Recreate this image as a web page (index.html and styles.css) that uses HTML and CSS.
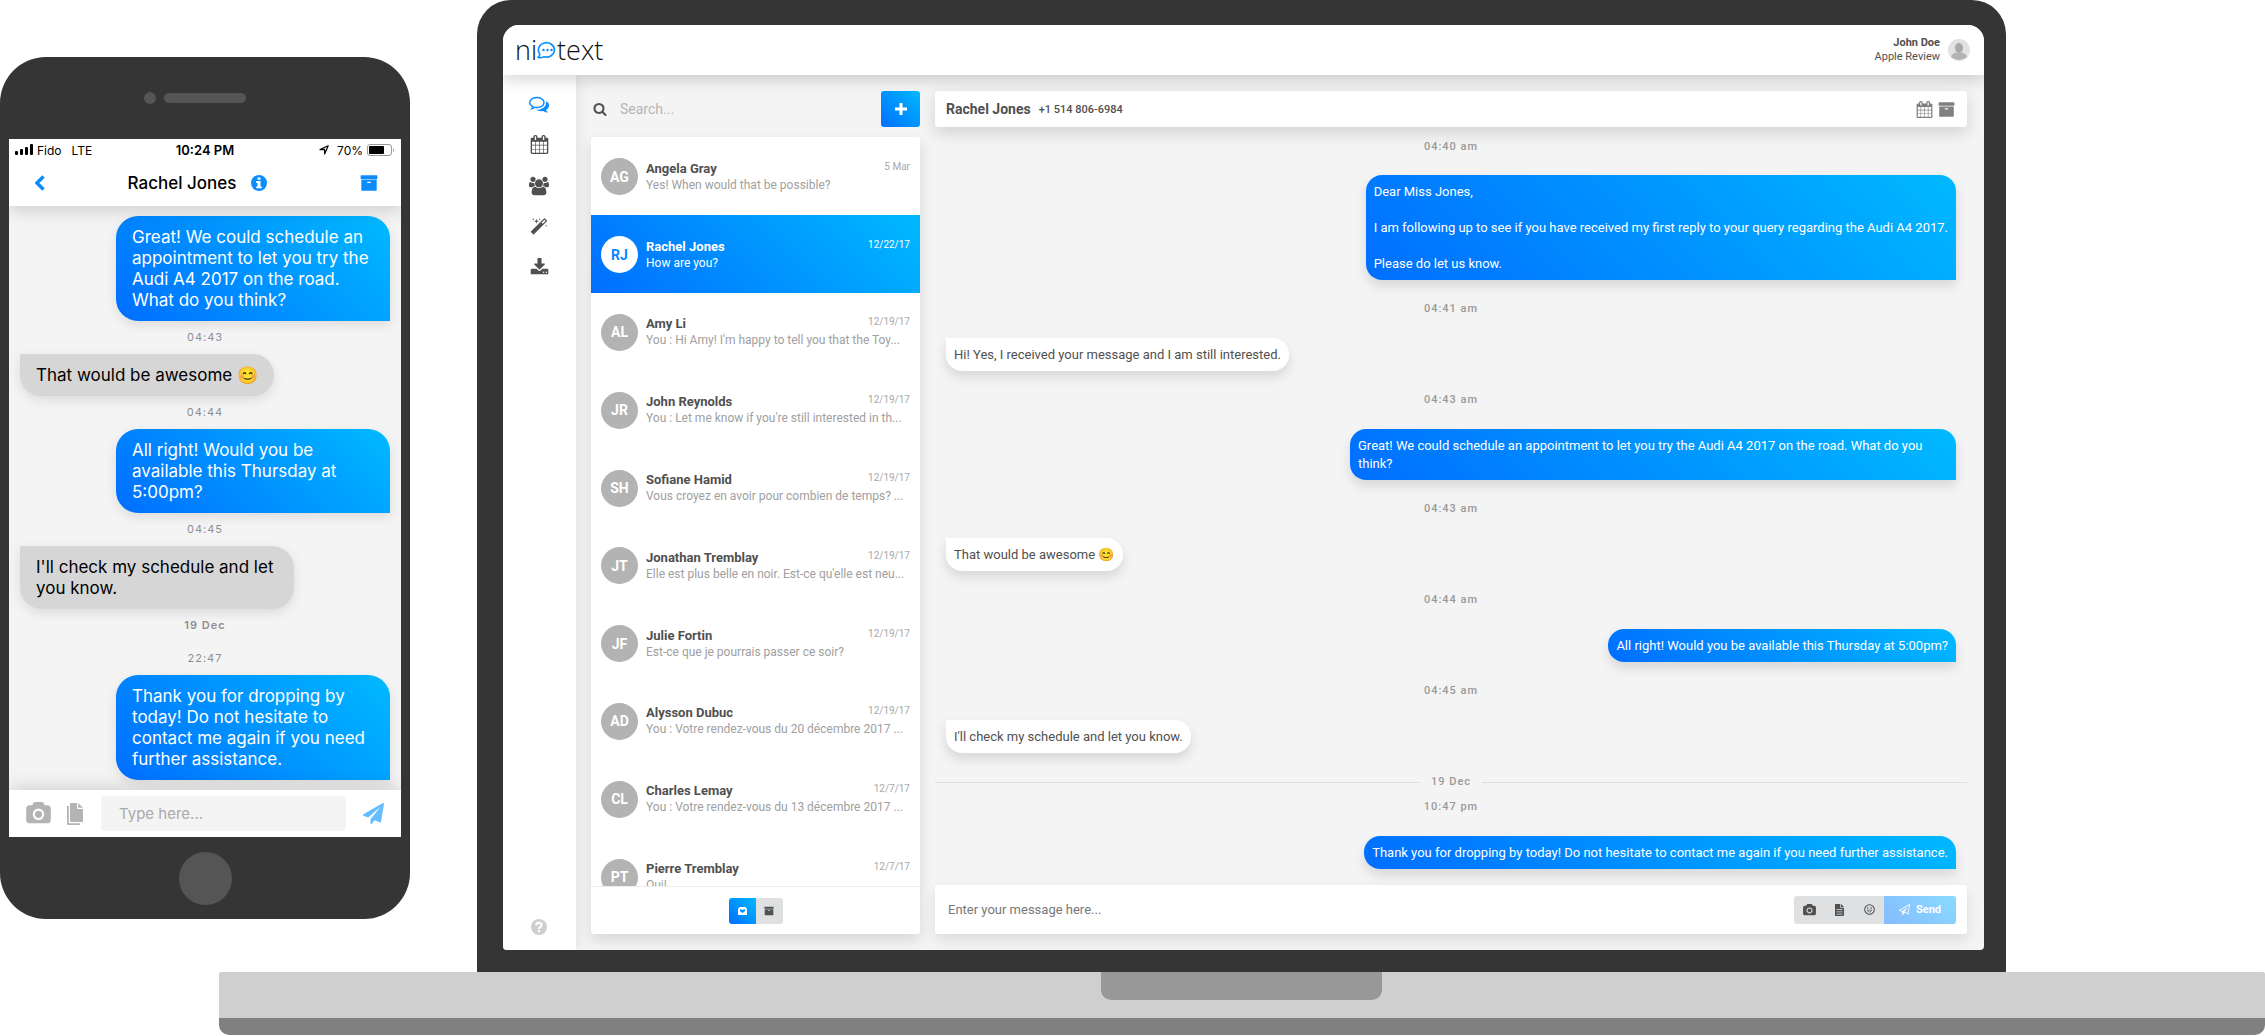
FILE: index.html
```html
<!DOCTYPE html>
<html lang="en">
<head>
<meta charset="utf-8">
<title>niotext</title>
<link rel="stylesheet" href="styles.css">
</head>
<body>
<svg class="sprite" aria-hidden="true">
  <symbol id="comments" viewBox="0 0 1792 1792"><path d="M704 384q-153 0-286 52t-211.500 141-78.500 191q0 82 53 158t149 132l97 56-35 84q34-20 62-39l44-31 53 10q78 14 153 14 153 0 286-52t211.500-141 78.500-191-78.500-191-211.500-141-286-52zm0-128q191 0 353.500 68.500t256.500 186.500 94 257-94 257-256.500 186.500-353.500 68.500q-86 0-176-16-124 88-278 128-36 9-86 16h-3q-11 0-20.500-8t-11.500-21q-1-3-1-6.500t.5-6.500 2-6l2.500-5 3.500-5.500 4-5 4.500-5 4-4.500q5-6 23-25t26-29.500 22.500-29 25-38.500 20.500-44q-124-72-195-177t-71-224q0-139 94-257t256.500-186.500 353.500-68.500zm822 1169q10 24 20.500 44t25 38.500 22.500 29 26 29.500 23 25q1 1 4 4.500t4.500 5 4 5 3.500 5.500l2.500 5 2 6 .5 6.500-1 6.500q-3 14-13 22t-22 7q-50-7-86-16-154-40-278-128-90 16-176 16-271 0-472-132 58 4 88 4 161 0 309-45t264-129q125-92 192-212t67-254q0-77-23-152 129 71 204 178t75 230q0 120-71 224.500t-195 176.500z"/></symbol>
  <symbol id="calendar" viewBox="0 0 1792 1792"><path d="M192 1664h288v-288h-288v288zm352 0h320v-288h-320v288zm-352-352h288v-320h-288v320zm352 0h320v-320h-320v320zm-352-384h288v-288h-288v288zm736 736h320v-288h-320v288zm-384-736h320v-288h-320v288zm768 736h288v-288h-288v288zm-384-352h320v-320h-320v320zm-352-864v-288q0-13-9.500-22.500t-22.500-9.500h-64q-13 0-22.500 9.500t-9.500 22.500v288q0 13 9.500 22.500t22.500 9.500h64q13 0 22.500-9.500t9.500-22.500zm736 864h288v-320h-288v320zm-384-384h320v-288h-320v288zm384 0h288v-288h-288v288zm32-480v-288q0-13-9.500-22.500t-22.500-9.500h-64q-13 0-22.500 9.500t-9.500 22.500v288q0 13 9.500 22.500t22.500 9.500h64q13 0 22.500-9.500t9.500-22.500zm384-64v1280q0 52-38 90t-90 38h-1408q-52 0-90-38t-38-90v-1280q0-52 38-90t90-38h128v-96q0-66 47-113t113-47h64q66 0 113 47t47 113v96h384v-96q0-66 47-113t113-47h64q66 0 113 47t47 113v96h128q52 0 90 38t38 90z"/></symbol>
  <symbol id="users" viewBox="0 0 1920 1792"><path d="M593 896q-162 5-265 128h-134q-82 0-138-40.500t-56-118.500q0-353 124-353 6 0 43.500 21t97.500 42.500 119 21.500q67 0 133-23-5 37-5 66 0 139 81 256zm1071 637q0 120-73 189.500t-194 69.500h-874q-121 0-194-69.500t-73-189.500q0-53 3.500-103.500t14-109 26.500-108.500 43-97.500 62-81 85.500-53.500 111.500-20q10 0 43 21.500t73 48 107 48 135 21.500 135-21.500 107-48 73-48 43-21.500q61 0 111.500 20t85.500 53.500 62 81 43 97.500 26.500 108.500 14 109 3.500 103.500zm-1024-1277q0 106-75 181t-181 75-181-75-75-181 75-181 181-75 181 75 75 181zm704 384q0 159-112.500 271.500t-271.500 112.500-271.500-112.500-112.500-271.500 112.500-271.500 271.500-112.500 271.500 112.500 112.500 271.500zm576 225q0 78-56 118.500t-138 40.500h-134q-103-123-265-128 81-117 81-256 0-29-5-66 66 23 133 23 59 0 119-21.500t97.500-42.500 43.500-21q124 0 124 353zm-128-609q0 106-75 181t-181 75-181-75-75-181 75-181 181-75 181 75 75 181z"/></symbol>
  <symbol id="magic" viewBox="0 0 1792 1792"><path d="M1254 581l293-293-107-107-293 293zm447-293q0 27-18 45l-1286 1286q-18 18-45 18t-45-18l-198-198q-18-18-18-45t18-45l1286-1286q18-18 45-18t45 18l198 198q18 18 18 45zm-1351-190l98 30-98 30-30 98-30-98-98-30 98-30 30-98zm350 162l196 60-196 60-60 196-60-196-196-60 196-60 60-196zm930 478l98 30-98 30-30 98-30-98-98-30 98-30 30-98zm-640-640l98 30-98 30-30 98-30-98-98-30 98-30 30-98z"/></symbol>
  <symbol id="download" viewBox="0 0 1792 1792"><path d="M1344 1344q0-26-19-45t-45-19-45 19-19 45 19 45 45 19 45-19 19-45zm256 0q0-26-19-45t-45-19-45 19-19 45 19 45 45 19 45-19 19-45zm128-224v320q0 40-28 68t-68 28h-1472q-40 0-68-28t-28-68v-320q0-40 28-68t68-28h465l135 136q58 56 136 56t136-56l136-136h464q40 0 68 28t28 68zm-325-569q17 41-14 70l-448 448q-18 19-45 19t-45-19l-448-448q-31-29-14-70 17-39 59-39h256v-448q0-26 19-45t45-19h256q26 0 45 19t19 45v448h256q42 0 59 39z"/></symbol>
  <symbol id="search" viewBox="0 0 1792 1792"><path d="M1216 832q0-185-131.500-316.500t-316.500-131.500-316.500 131.500-131.500 316.500 131.500 316.500 316.500 131.500 316.500-131.500 131.500-316.500zm512 832q0 52-38 90t-90 38q-54 0-90-38l-343-342q-179 124-399 124-143 0-273.500-55.500t-225-150-150-225-55.500-273.500 55.500-273.500 150-225 225-150 273.500-55.500 273.500 55.500 225 150 150 225 55.500 273.500q0 220-124 399l343 343q37 37 37 90z"/></symbol>
  <symbol id="archive" viewBox="0 0 1792 1792"><path d="M1088 832q0-26-19-45t-45-19h-256q-26 0-45 19t-19 45 19 45 45 19h256q26 0 45-19t19-45zm576-192v960q0 26-19 45t-45 19h-1408q-26 0-45-19t-19-45v-960q0-26 19-45t45-19h1408q26 0 45 19t19 45zm64-448v256q0 26-19 45t-45 19h-1536q-26 0-45-19t-19-45v-256q0-26 19-45t45-19h1536q26 0 45 19t19 45z"/></symbol>
  <symbol id="plane" viewBox="0 0 1792 1792"><path d="M1764 11q33 24 27 64l-256 1536q-5 29-32 45-14 8-31 8-11 0-24-5l-453-185-242 295q-18 23-49 23-13 0-22-4-19-7-30.500-23.500t-11.500-36.500v-349l864-1059-1069 925-395-162q-37-14-40-55-2-40 32-59l1664-960q15-9 32-9 20 0 36 11z"/></symbol>
  <symbol id="plane-o" viewBox="0 0 1792 1792"><path d="M1764 11q33 24 27 64l-256 1536q-5 29-32 45-14 8-31 8-11 0-24-5l-527-215-298 327q-18 21-47 21-14 0-23-4-19-7-30-23.500t-11-36.500v-452l-472-193q-37-14-40-55-3-39 32-59l1664-960q35-21 68 2zm-342 1499l221-1323-1434 827 336 137 863-639-478 797z"/></symbol>
  <symbol id="camera" viewBox="0 0 1920 1792"><path d="M960 672q119 0 203.500 84.500t84.500 203.500-84.500 203.500-203.500 84.500-203.500-84.500-84.500-203.500 84.500-203.500 203.500-84.500zm704-416q106 0 181 75t75 181v896q0 106-75 181t-181 75h-1408q-106 0-181-75t-75-181v-896q0-106 75-181t181-75h224l51-136q19-49 69.500-84.500t103.500-35.500h512q53 0 103.500 35.500t69.500 84.500l51 136h224zm-704 1152q185 0 316.500-131.500t131.500-316.500-131.500-316.500-316.500-131.500-316.500 131.500-131.500 316.500 131.500 316.500 316.500 131.500z"/></symbol>
  <symbol id="doc" viewBox="0 0 14 16"><path fill-rule="evenodd" d="M1 0h7v5h5v10q0 1-1 1H2q-1 0-1-1zM9 0l4 4H9zM3 7v1h8V7zm0 3v1h8v-1zm0 3v1h8v-1z"/></symbol>
  <symbol id="files" viewBox="0 0 17 22"><path d="M3 0h7v6h6v12q0 1-1 1H4q-1 0-1-1zM11.200 0L16 4.800h-4.800zM0 3h1.800v17.200H13V22H1q-1 0-1-1z"/></symbol>
  <symbol id="plus" viewBox="0 0 12 12"><path d="M4.500 0h3v4.500H12v3H7.500V12h-3V7.500H0v-3h4.500z"/></symbol>
  <symbol id="back" viewBox="0 0 10 16"><path d="M8.500 1.500L2 8l6.500 6.500" fill="none" stroke="currentColor" stroke-width="3.400"/></symbol>
  <symbol id="info" viewBox="0 0 16 16"><path fill-rule="evenodd" d="M8 0a8 8 0 100 16A8 8 0 008 0zM6.500 2.500h3v2.300h-3zM5.200 6h4.300v5.400h1.300v1.900H5.200v-1.900h1.300V7.900H5.200z"/></symbol>
  <symbol id="help" viewBox="0 0 16 16"><circle cx="8" cy="8" r="8"/><path d="M5.300 6.200C5.500 2.800 10.700 3 10.500 6.200 10.400 8 8 8 8 10" fill="none" stroke="#fff" stroke-width="2.200"/><path d="M6.900 11h2.300v2.200H6.900z" fill="#fff"/></symbol>
  <symbol id="inbox" viewBox="0 0 16 14"><path fill-rule="evenodd" d="M4 0h8q3 0 3.500 3L16 7v6q0 1-1 1H1q-1 0-1-1V7l.5-4Q1 0 4 0zM4 3.500L3.200 7 8 10.500 12.800 7 12 3.500 8 5z"/></symbol>
  <symbol id="smile" viewBox="0 0 16 16"><circle cx="8" cy="8" r="7" fill="none" stroke="currentColor" stroke-width="1.500"/><path d="M4.500 9q3.500 5.500 7 0z" fill="none" stroke="currentColor"/><circle cx="5.600" cy="5.800" r="1.200"/><circle cx="10.400" cy="5.800" r="1.200"/></symbol>
  <symbol id="person" viewBox="0 0 22 22"><circle cx="11" cy="11" r="11" fill="#e2e2e2"/><path d="M3 18q1-4 5.500-4.500h5Q18 14 19 18q-8 6-16 0z" fill="#b3b3b3"/><ellipse cx="11" cy="9" rx="4" ry="5" fill="#a9a9a9"/></symbol>
  <symbol id="signal" viewBox="0 0 18 12"><rect y="7" width="3" height="4" rx="1"/><rect x="5" y="5" width="3" height="6" rx="1"/><rect x="10" y="3" width="3" height="8" rx="1"/><rect x="15" y="0" width="3" height="11" rx="1"/></symbol>
  <symbol id="locate" viewBox="0 0 10 10"><path d="M9.200.8L5.600 9V4.600H1z" fill="none" stroke="currentColor" stroke-width="1.200" stroke-linejoin="round"/></symbol>
  <symbol id="battery" viewBox="0 0 28 12"><rect x=".5" y=".5" width="24" height="11" rx="2.500" fill="none" stroke="#999"/><rect x="2" y="2" width="15" height="8" rx="1"/><path d="M26 4q2 2 0 4z" fill="#999"/></symbol>
  <symbol id="bubble" viewBox="0 0 20 18"><path d="M1 16.500q2-1.500 1.600-3.800A8 7.200 0 1 1 7 15.800Q4 17.200 1 16.500z" fill="none" stroke="#0a94ff" stroke-width="1.700" stroke-linejoin="round"/><circle cx="6.500" cy="9" r="1.200" fill="#0a84ff"/><circle cx="10.500" cy="9" r="1.200" fill="#0a84ff"/><circle cx="14.500" cy="9" r="1.200" fill="#0a84ff"/></symbol>
</svg>

<main class="stage">
  <section class="phone" aria-label="Mobile app">
    <div class="phone-top"><span class="lens"></span><span class="speaker"></span></div>
    <div class="phone-screen">
      <header class="phone-head">
        <div class="status">
          <span class="status-left"><svg class="i-signal"><use href="#signal"/></svg>Fido<span class="lte">LTE</span></span>
          <span class="clock">10:24 PM</span>
          <span class="status-right"><svg class="i-locate"><use href="#locate"/></svg>70%<svg class="i-battery"><use href="#battery"/></svg></span>
        </div>
        <div class="phone-nav">
          <button class="icon-btn" aria-label="Back"><svg class="i-back"><use href="#back"/></svg></button>
          <div class="phone-contact">
            <h2 class="phone-title">Rachel Jones</h2>
            <button class="icon-btn" aria-label="Details"><svg class="i16"><use href="#info"/></svg></button>
          </div>
          <button class="icon-btn" aria-label="Archive"><svg class="i18"><use href="#archive"/></svg></button>
        </div>
      </header>
      <div class="phone-chat">
        <p class="sms out">Great! We could schedule an appointment to let you try the Audi A4 2017 on the road. What do you think?</p>
        <time class="sms-time">04:43</time>
        <p class="sms in">That would be awesome <span class="emoji">😊</span></p>
        <time class="sms-time">04:44</time>
        <p class="sms out">All right! Would you be available this Thursday at 5:00pm?</p>
        <time class="sms-time">04:45</time>
        <p class="sms in">I'll check my schedule and let you know.</p>
        <time class="sms-time sms-date">19 Dec</time>
        <time class="sms-time">22:47</time>
        <p class="sms out">Thank you for dropping by today! Do not hesitate to contact me again if you need further assistance.</p>
      </div>
      <form class="phone-compose">
        <button type="button" class="icon-btn muted" aria-label="Camera"><svg class="i-camera"><use href="#camera"/></svg></button>
        <button type="button" class="icon-btn muted" aria-label="Files"><svg class="i-files"><use href="#files"/></svg></button>
        <input class="phone-input" type="text" placeholder="Type here..." aria-label="Message">
        <button type="button" class="icon-btn faded" aria-label="Send"><svg class="i-plane"><use href="#plane"/></svg></button>
      </form>
    </div>
    <div class="phone-bottom"><span class="home"></span></div>
  </section>

  <section class="lid" aria-label="Desktop app">
    <div class="screen">
      <header class="topbar">
        <a class="logo" href="#" aria-label="niotext">ni<svg class="i-bubble"><use href="#bubble"/></svg>text</a>
        <div class="user"><p class="user-text"><strong>John Doe</strong><br>Apple Review</p><svg class="i-person"><use href="#person"/></svg></div>
      </header>
      <div class="workspace">
        <nav class="rail" aria-label="Main">
          <a href="#" class="active" aria-label="Conversations"><svg class="i20"><use href="#comments"/></svg></a>
          <a href="#" aria-label="Calendar"><svg class="i19"><use href="#calendar"/></svg></a>
          <a href="#" aria-label="Contacts"><svg class="i20"><use href="#users"/></svg></a>
          <a href="#" aria-label="Automation"><svg class="i18"><use href="#magic"/></svg></a>
          <a href="#" aria-label="Download"><svg class="i19"><use href="#download"/></svg></a>
          <a href="#" class="help" aria-label="Help"><svg class="i16"><use href="#help"/></svg></a>
        </nav>

        <section class="inbox" aria-label="Conversations">
          <div class="search-row">
            <label class="search"><svg class="i14"><use href="#search"/></svg><input type="text" placeholder="Search..." aria-label="Search"></label>
            <button class="add" aria-label="New conversation"><svg class="i12"><use href="#plus"/></svg></button>
          </div>
          <div class="card">
            <div class="list-clip">
              <ul class="list">
                <li class="row"><span class="avatar">AG</span><div class="row-text"><h3>Angela Gray</h3><time>5 Mar</time><p>Yes! When would that be possible?</p></div></li>
                <li class="row selected"><span class="avatar">RJ</span><div class="row-text"><h3>Rachel Jones</h3><time>12/22/17</time><p>How are you?</p></div></li>
                <li class="row"><span class="avatar">AL</span><div class="row-text"><h3>Amy Li</h3><time>12/19/17</time><p>You : Hi Amy! I'm happy to tell you that the Toy...</p></div></li>
                <li class="row"><span class="avatar">JR</span><div class="row-text"><h3>John Reynolds</h3><time>12/19/17</time><p>You : Let me know if you're still interested in th...</p></div></li>
                <li class="row"><span class="avatar">SH</span><div class="row-text"><h3>Sofiane Hamid</h3><time>12/19/17</time><p>Vous croyez en avoir pour combien de temps? ...</p></div></li>
                <li class="row"><span class="avatar">JT</span><div class="row-text"><h3>Jonathan Tremblay</h3><time>12/19/17</time><p>Elle est plus belle en noir. Est-ce qu'elle est neu...</p></div></li>
                <li class="row"><span class="avatar">JF</span><div class="row-text"><h3>Julie Fortin</h3><time>12/19/17</time><p>Est-ce que je pourrais passer ce soir?</p></div></li>
                <li class="row"><span class="avatar">AD</span><div class="row-text"><h3>Alysson Dubuc</h3><time>12/19/17</time><p>You : Votre rendez-vous du 20 décembre 2017 ...</p></div></li>
                <li class="row"><span class="avatar">CL</span><div class="row-text"><h3>Charles Lemay</h3><time>12/7/17</time><p>You : Votre rendez-vous du 13 décembre 2017 ...</p></div></li>
                <li class="row"><span class="avatar">PT</span><div class="row-text"><h3>Pierre Tremblay</h3><time>12/7/17</time><p>Oui!</p></div></li>
              </ul>
            </div>
            <div class="card-foot">
              <button class="toggle on" aria-label="Inbox"><svg class="i-inbox"><use href="#inbox"/></svg></button>
              <button class="toggle" aria-label="Archived"><svg class="i10"><use href="#archive"/></svg></button>
            </div>
          </div>
        </section>

        <section class="chat" aria-label="Rachel Jones">
          <header class="chat-head">
            <h2>Rachel Jones</h2><span class="number">+1 514 806-6984</span>
            <div class="chat-tools">
              <button class="icon-btn" aria-label="Calendar"><svg class="i17"><use href="#calendar"/></svg></button>
              <button class="icon-btn" aria-label="Archive"><svg class="i17"><use href="#archive"/></svg></button>
            </div>
          </header>
          <div class="thread">
            <time class="stamp">04:40 am</time>
            <p class="msg out">Dear Miss Jones,<br><br>I am following up to see if you have received my first reply to your query regarding the Audi A4 2017.<br><br>Please do let us know.</p>
            <time class="stamp">04:41 am</time>
            <p class="msg in">Hi! Yes, I received your message and I am still interested.</p>
            <time class="stamp">04:43 am</time>
            <p class="msg out">Great! We could schedule an appointment to let you try the Audi A4 2017 on the road. What do you think?</p>
            <time class="stamp">04:43 am</time>
            <p class="msg in">That would be awesome <span class="emoji">😊</span></p>
            <time class="stamp">04:44 am</time>
            <p class="msg out">All right! Would you be available this Thursday at 5:00pm?</p>
            <time class="stamp">04:45 am</time>
            <p class="msg in">I'll check my schedule and let you know.</p>
            <time class="day">19 Dec</time>
            <time class="stamp late">10:47 pm</time>
            <p class="msg out">Thank you for dropping by today! Do not hesitate to contact me again if you need further assistance.</p>
          </div>
          <form class="compose">
            <input type="text" placeholder="Enter your message here..." aria-label="Message">
            <div class="tools">
              <button type="button" aria-label="Photo"><svg class="i-cam-s"><use href="#camera"/></svg></button>
              <button type="button" aria-label="Document"><svg class="i-doc"><use href="#doc"/></svg></button>
              <button type="button" aria-label="Emoji"><svg class="i11"><use href="#smile"/></svg></button>
              <button type="button" class="send"><svg class="i11"><use href="#plane-o"/></svg>Send</button>
            </div>
          </form>
        </section>
      </div>
    </div>
  </section>

  <div class="base"><div class="deck"><span class="notch"></span></div><div class="edge"></div></div>
</main>
</body>
</html>
```
FILE: styles.css
```css
* { box-sizing: border-box; }
body { margin: 0; background: #fff; font-family: Roboto, "Liberation Sans", sans-serif; color: #505050; }
h2, h3, p, ul { margin: 0; padding: 0; }
ul { list-style: none; }
a { color: inherit; text-decoration: none; }
button, input { font: inherit; color: inherit; border: 0; padding: 0; background: none; outline: 0; }
button { display: flex; align-items: center; justify-content: center; }
svg { display: block; fill: currentColor; flex: none; }
.sprite { position: absolute; width: 0; height: 0; }
.icon-btn { flex: none; }

.i10 { width: 10px; height: 10px; }
.i11 { width: 11px; height: 11px; }
.i12 { width: 12px; height: 12px; }
.i14 { width: 14px; height: 14px; }
.i16 { width: 16px; height: 16px; }
.i17 { width: 17px; height: 17px; }
.i18 { width: 18px; height: 18px; }
.i19 { width: 19px; height: 19px; }
.i20 { width: 20px; height: 20px; }

.stage {
  display: grid;
  grid-template-columns: 410px minmax(0, 1fr);
  column-gap: 67px;
}

/* phone */
.phone {
  margin-top: 57px;
  align-self: start;
  padding: 0 9px;
  background: #353535;
  border-radius: 46px;
  font-family: Inter, "Liberation Sans", sans-serif;
}
.phone-top { display: grid; grid-template-columns: 1fr auto 1fr; column-gap: 8px; align-items: center; height: 82px; }
.lens { width: 12px; height: 12px; border-radius: 50%; background: #555; justify-self: end; }
.speaker { width: 82px; height: 10px; border-radius: 5px; background: #555; }
.phone-bottom { display: flex; align-items: center; justify-content: center; height: 82px; }
.home { width: 53px; height: 53px; border-radius: 50%; background: #555; }
.phone-screen { background: #f4f4f4; color: #000; }
.phone-head { position: relative; background: #fff; box-shadow: 0 4px 16px rgba(0, 0, 0, .16); clip-path: inset(0 0 -20px 0); }
.status { display: grid; grid-template-columns: 1fr auto 1fr; align-items: center; height: 22px; padding: 0 6px; font-size: 12px; }
.status-left, .status-right { display: flex; align-items: center; gap: 4px; }
.status-right { justify-content: flex-end; }
.lte { margin-left: 6px; }
.clock { font-size: 13px; font-weight: 600; }
.i-signal { width: 18px; height: 12px; }
.i-locate { width: 10px; height: 10px; margin-right: 4px; }
.i-battery { width: 28px; height: 12px; }
.phone-nav { display: flex; align-items: center; justify-content: space-between; height: 45px; padding: 0 23px 2px 26px; color: #0a8cff; }
.phone-contact { display: flex; align-items: center; gap: 15px; margin-right: 10px; }
.phone-title { font-size: 17px; font-weight: 500; color: #000; }
.i-back { width: 10px; height: 16px; }
.phone-chat { display: flex; flex-direction: column; padding: 10px 11px; }
.sms { width: 274px; padding: 11px 16px 10px; font-size: 17px; line-height: 21px; box-shadow: 0 4px 12px rgba(0, 0, 0, .1); }
.sms.out { align-self: flex-end; color: #fff; background: linear-gradient(45deg, #006eff, #00b9ff); border-radius: 22px 22px 0 22px; }
.sms.in { align-self: flex-start; width: auto; max-width: 274px; background: #d6d6d6; border-radius: 0 22px 22px 22px; }
.sms-time { height: 33px; line-height: 33px; text-align: center; font-size: 11px; letter-spacing: 1px; color: #8e8e93; }
.sms-date { font-weight: 600; }
.emoji { font-family: "Noto Color Emoji", sans-serif; }
.phone-compose { position: relative; display: flex; align-items: center; height: 47px; padding: 0 17px; background: #fff; box-shadow: 0 -4px 16px rgba(0, 0, 0, .12); clip-path: inset(-20px 0 0 0); }
.muted { color: #b4b4b4; }
.faded { color: #66bdff; }
.phone-input { flex: 1; min-width: 0; height: 35px; margin: 0 17px; padding: 0 18px; border-radius: 4px; background: #f4f4f4; font-size: 15px; }
.phone-input::placeholder { color: #aaa; opacity: 1; }
.i-camera { width: 25px; height: 23px; }
.i-files { width: 17px; height: 22px; margin-left: 16px; }
.i-plane { width: 21px; height: 21px; }

/* laptop */
.lid { margin-right: 259px; padding: 25px 22px 22px 26px; background: #353535; border-radius: 34px 34px 0 0; }
.screen { overflow: hidden; background: #f4f4f4; border-radius: 16px 16px 4px 4px; }
.topbar { position: relative; z-index: 2; display: flex; align-items: center; justify-content: space-between; height: 50px; padding: 0 14px 0 12px; background: #fff; box-shadow: 0 4px 16px rgba(0, 0, 0, .18); }
.logo { display: flex; align-items: center; font: 300 27px/50px "Open Sans", sans-serif; color: #111; }
.i-bubble { width: 20px; height: 18px; }
.user { display: flex; align-items: center; gap: 8px; }
.user-text { text-align: right; font-size: 11px; line-height: 14px; }
.user-text strong { font-weight: 700; }
.i-person { width: 22px; height: 22px; }
.workspace { display: grid; grid-template-columns: 73px 329px minmax(0, 1fr); }
.rail { display: flex; flex-direction: column; align-items: center; padding: 8px 1px 14px 0; background: #fff; box-shadow: 2px 0 12px rgba(0, 0, 0, .08); }
.rail a { display: flex; align-items: center; justify-content: center; width: 40px; height: 41px; }
.rail .active { color: #0a8cff; }
.rail .help { height: 18px; margin-top: auto; color: #cfcfcf; }
.inbox { display: flex; flex-direction: column; margin: 16px -15px 16px 15px; }
.search-row { display: flex; height: 36px; margin-bottom: 10px; }
.search { display: flex; flex: 1; align-items: center; gap: 13px; padding-left: 2px; }
.search input { flex: 1; min-width: 0; font-size: 14px; }
.search input::placeholder { color: #b5b5b5; opacity: 1; }
.add { width: 39px; height: 36px; border-radius: 3px; color: #fff; background: linear-gradient(45deg, #006eff, #00b9ff); }
.card { display: flex; flex: 1; flex-direction: column; background: #fff; border-radius: 3px; box-shadow: 0 6px 14px rgba(0, 0, 0, .12); }
.list-clip { flex: 1 1 0px; min-height: 0; overflow: hidden; }
.list { display: grid; grid-template-rows: repeat(10, 1fr); height: 778px; }
.row { display: flex; align-items: center; padding: 2px 10px 0; }
.avatar { display: flex; flex: none; align-items: center; justify-content: center; width: 37px; height: 37px; margin-right: 8px; border-radius: 50%; background: #b3b3b3; color: #fff; font-size: 14px; font-weight: 700; }
.row-text { display: grid; flex: 1; grid-template-columns: 1fr auto; min-width: 0; }
.row h3 { font-size: 13px; font-weight: 700; line-height: 17px; }
.row time { font-size: 10px; line-height: 14px; color: #a8a8a8; }
.row p { grid-column: 1 / -1; overflow: hidden; white-space: nowrap; font-size: 12px; line-height: 17px; color: #a0a0a0; }
.selected { background: linear-gradient(45deg, #006eff, #00b9ff); }
.selected h3, .selected p, .selected time { color: #fff; }
.selected .avatar { background: #fff; color: #0a84ff; }
.card-foot { display: flex; align-items: center; justify-content: center; height: 48px; border-top: 1px solid #eee; }
.toggle { width: 27px; height: 26px; border-radius: 0 3px 3px 0; background: #dfe0e2; }
.toggle.on { border-radius: 3px 0 0 3px; color: #fff; background: linear-gradient(45deg, #006eff, #00b9ff); }
.i-inbox { width: 9px; height: 8px; }

.chat { display: flex; flex-direction: column; margin: 16px 17px 16px 30px; }
.chat-head { position: relative; display: flex; align-items: center; height: 36px; padding: 0 12px 0 11px; background: #fff; border-radius: 3px; box-shadow: 0 6px 16px rgba(0, 0, 0, .14); }
.chat-head h2 { font-size: 14px; font-weight: 700; }
.number { margin-left: 8px; font-size: 11px; font-weight: 500; }
.chat-tools { display: flex; gap: 5px; margin-left: auto; color: #808080; }
.thread { display: flex; flex-direction: column; padding: 12px 11px 16px; }
.msg { max-width: 60%; padding: 8px 8px 7px; font-size: 13px; line-height: 18px; box-shadow: 0 6px 12px rgba(0, 0, 0, .12); }
.msg.in { align-self: flex-start; background: #fff; border-radius: 0 16px 16px 16px; }
.msg.out { align-self: flex-end; color: #fff; background: linear-gradient(45deg, #006eff, #00b9ff); border-radius: 16px 16px 0 16px; }
.stamp, .day { text-align: center; font-size: 11px; font-weight: 500; line-height: 16px; letter-spacing: 1px; color: #999; }
.stamp { margin: 21px 0; }
.stamp:first-child { margin: 0 0 20px; }
.stamp.late { margin-top: 9px; }
.day { display: flex; align-items: center; gap: 11px; margin: 21px -11px 0; }
.day::before, .day::after { content: ""; flex: 1; height: 1px; background: #dedede; }
.compose { position: relative; display: flex; align-items: center; height: 49px; padding: 0 11px 0 13px; background: #fff; border-radius: 2px; box-shadow: 0 6px 14px rgba(0, 0, 0, .1); }
.compose input { flex: 1; min-width: 0; font-size: 13px; }
.compose input::placeholder { color: #777; opacity: 1; }
.tools { display: flex; height: 28px; overflow: hidden; border-radius: 3px; background: #dfe0e2; }
.tools button { width: 30px; }
.tools .send { width: 72px; gap: 6px; color: #fff; background: linear-gradient(45deg, #85bcff, #8adaff); font-size: 11px; font-weight: 700; }
.i-cam-s { width: 13px; height: 12px; }
.i-doc { width: 11px; height: 12px; }

.base { grid-column: 1 / -1; margin-left: 219px; overflow: hidden; border-radius: 2px 2px 10px 10px; }
.deck { display: flex; height: 46px; padding-right: 23px; background: #cfcfcf; }
.notch { width: 281px; height: 28px; margin-left: 882px; border-radius: 0 0 10px 10px; background: #989898; }
.edge { height: 17px; background: #808080; }
```
